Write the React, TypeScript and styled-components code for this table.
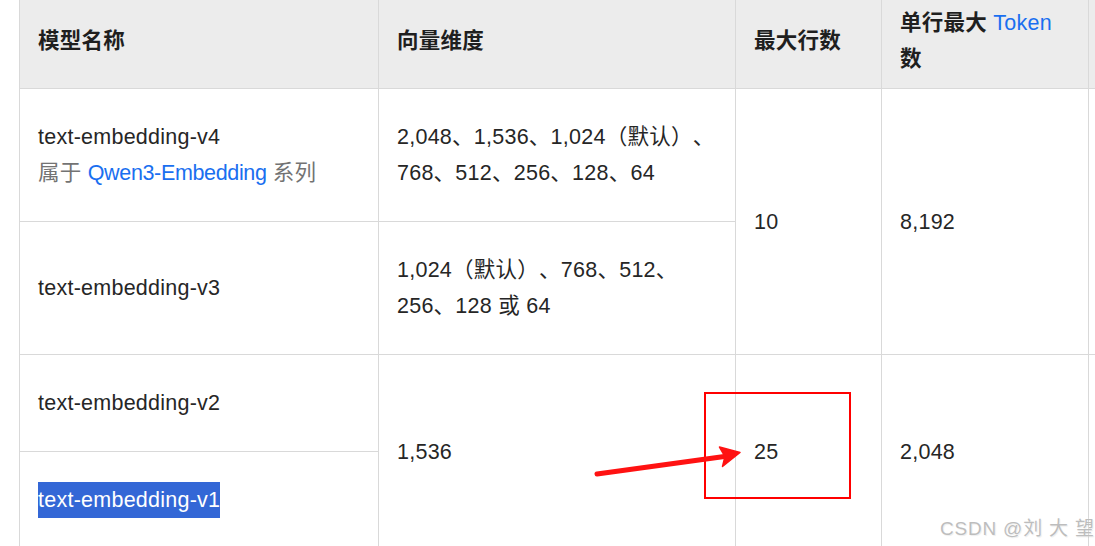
import React from "react";
import styled, { createGlobalStyle } from "styled-components";

const GlobalStyle = createGlobalStyle`
  html, body {
    margin: 0;
    padding: 0;
    background: #ffffff;
    overflow: hidden;
  }
`;

const Page = styled.div`
  position: relative;
  width: 1095px;
  height: 546px;
  overflow: hidden;
  box-sizing: border-box;
  padding-left: 19px;
  background: #ffffff;
  font-family: "Liberation Sans", Arial, "Noto Sans CJK SC", sans-serif;
  color: #262626;
  text-spacing-trim: space-all;
`;

const Table = styled.table`
  border-collapse: collapse;
  table-layout: fixed;
  width: 1270px;
  margin-top: -7px;
  font-size: 21.5px;
  line-height: 36px;
  letter-spacing: 0.25px;
`;

const HeadCell = styled.th`
  background: #ececec;
  color: #1f1f1f;
  font-weight: 700;
  text-align: left;
  padding: 11px 18px;
  border: 1px solid #d9d9d9;
  vertical-align: middle;
`;

const Cell = styled.td`
  padding: 30px 18px;
  border: 1px solid #d9d9d9;
  vertical-align: middle;
  text-align: left;
`;

const Muted = styled.span`
  color: #737373;
`;

const Link = styled.span<{ $tight?: boolean }>`
  color: #1a6ff0;
  font-weight: 400;
  letter-spacing: ${(p) => (p.$tight ? "-0.35px" : "inherit")};
`;

const Selected = styled.span`
  display: inline-block;
  background: #3367d6;
  color: #ffffff;
  line-height: 36px;
`;

const Marker = styled.div`
  position: absolute;
  left: 704px;
  top: 392px;
  width: 147px;
  height: 107px;
  box-sizing: border-box;
  border: 2px solid #ff0000;
  pointer-events: none;
`;

const Arrow = styled.svg`
  position: absolute;
  left: 0;
  top: 0;
  pointer-events: none;
`;

const Watermark = styled.div`
  position: absolute;
  left: 940px;
  top: 513px;
  font-family: "Liberation Sans", Arial, "Noto Sans CJK SC", sans-serif;
  font-size: 19px;
  letter-spacing: 0.8px;
  white-space: nowrap;
  color: #bdbdbd;
  text-shadow: 0 0 1px #ffffff, 1px 1px 1px rgba(0, 0, 0, 0.08);
`;

const widths = [359, 357, 146, 207, 200];

const App = () => {
  return (
    <Page>
      <GlobalStyle />
      <Table>
        <colgroup>
          {widths.map((w, i) => (
            <col key={i} style={{ width: w }} />
          ))}
        </colgroup>
        <thead>
          <tr>
            <HeadCell>模型名称</HeadCell>
            <HeadCell>向量维度</HeadCell>
            <HeadCell>最大行数</HeadCell>
            <HeadCell>
              单行最大 <Link>Token</Link>
              <br />数
            </HeadCell>
            <HeadCell />
          </tr>
        </thead>
        <tbody>
          <tr>
            <Cell>
              text-embedding-v4
              <br />
              <Muted>
                属于 <Link $tight>Qwen3-Embedding</Link> 系列
              </Muted>
            </Cell>
            <Cell>
              2,048、1,536、1,024（默认）、
              <br />
              768、512、256、128、64
            </Cell>
            <Cell rowSpan={2}>10</Cell>
            <Cell rowSpan={2}>8,192</Cell>
            <Cell rowSpan={2} />
          </tr>
          <tr>
            <Cell>text-embedding-v3</Cell>
            <Cell>
              1,024（默认）、768、512、
              <br />
              256、128 或 64
            </Cell>
          </tr>
          <tr>
            <Cell>text-embedding-v2</Cell>
            <Cell rowSpan={2}>1,536</Cell>
            <Cell rowSpan={2}>25</Cell>
            <Cell rowSpan={2}>2,048</Cell>
            <Cell rowSpan={2} />
          </tr>
          <tr>
            <Cell>
              <Selected>text-embedding-v1</Selected>
            </Cell>
          </tr>
        </tbody>
      </Table>

      <Marker />
      <Arrow width="1095" height="546" viewBox="0 0 1095 546">
        <line
          x1="597"
          y1="474"
          x2="728"
          y2="456"
          stroke="#ff1212"
          strokeWidth="5"
          strokeLinecap="round"
        />
        <polygon
          points="740,452.5 719.5,447 725,456.5 722.5,466.5"
          fill="#ff1212"
          stroke="#ff1212"
          strokeWidth="1.5"
          strokeLinejoin="round"
        />
      </Arrow>
      <Watermark>CSDN @刘 大 望</Watermark>
    </Page>
  );
};

export default App;
